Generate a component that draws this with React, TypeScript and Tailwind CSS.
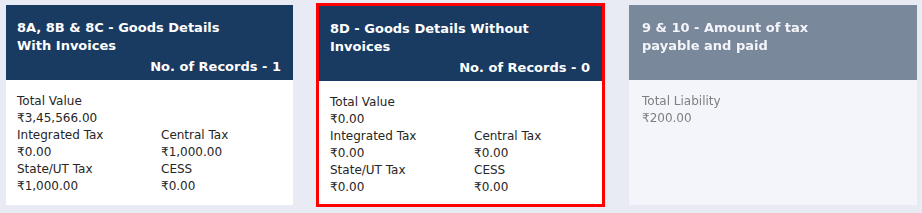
import React from "react";

type Field = { label: string; value: string };

type Card = {
  title: string;
  records?: number;
  total: Field;
  taxes?: Field[];
};

const cards: Card[] = [
  {
    title: "8A, 8B & 8C - Goods Details With Invoices",
    records: 1,
    total: { label: "Total Value", value: "₹3,45,566.00" },
    taxes: [
      { label: "Integrated Tax", value: "₹0.00" },
      { label: "Central Tax", value: "₹1,000.00" },
      { label: "State/UT Tax", value: "₹1,000.00" },
      { label: "CESS", value: "₹0.00" },
    ],
  },
  {
    title: "8D - Goods Details Without Invoices",
    records: 0,
    total: { label: "Total Value", value: "₹0.00" },
    taxes: [
      { label: "Integrated Tax", value: "₹0.00" },
      { label: "Central Tax", value: "₹0.00" },
      { label: "State/UT Tax", value: "₹0.00" },
      { label: "CESS", value: "₹0.00" },
    ],
  },
  {
    title: "9 & 10 - Amount of tax payable and paid",
    total: { label: "Total Liability", value: "₹200.00" },
  },
];

function FieldBlock({ field }: { field: Field }) {
  return (
    <div className="flex flex-col">
      <span className="leading-[18px]">{field.label}</span>
      <span className="leading-[16px]">{field.value}</span>
    </div>
  );
}

function Tile({ card, inset = 11 }: { card: Card; inset?: 11 | 13 }) {
  const pad = inset === 13 ? "pl-[13px]" : "pl-[11px]";
  return (
    <div className="flex h-full flex-col bg-white">
      <div
        className={`flex h-[75px] flex-col bg-[#193a61] ${pad} pr-[12px] pt-[14px] text-[13px] font-bold leading-[18px] text-white`}
      >
        <div className="max-w-[212px]">{card.title}</div>
        {card.records !== undefined && (
          <div className="mt-[3px] text-right">No. of Records - {card.records}</div>
        )}
      </div>
      <div className={`flex flex-col ${pad} pt-[12px] text-[12px] text-[#262626]`}>
        <FieldBlock field={card.total} />
        {card.taxes && (
          <div className="grid grid-cols-[144px_1fr]">
            {card.taxes.map((t) => (
              <FieldBlock key={t.label} field={t} />
            ))}
          </div>
        )}
      </div>
    </div>
  );
}

export default function App() {
  return (
    <div
      className="flex h-[213px] w-[922px] bg-[#e8eaf4]"
      style={{ fontFamily: '"DejaVu Sans", Verdana, sans-serif' }}
    >
      <div className="ml-[6px] mt-[5px] h-[200px] w-[287px]">
        <Tile card={cards[0]} />
      </div>
      <div className="ml-[23px] mt-[3px] h-[204px] w-[289px] border-[3px] border-[#ff0000]">
        <Tile card={cards[1]} />
      </div>
      <div className="ml-[24px] mt-[5px] h-[200px] w-[288px] opacity-55 grayscale-[30%]">
        <Tile card={cards[2]} inset={13} />
      </div>
    </div>
  );
}
